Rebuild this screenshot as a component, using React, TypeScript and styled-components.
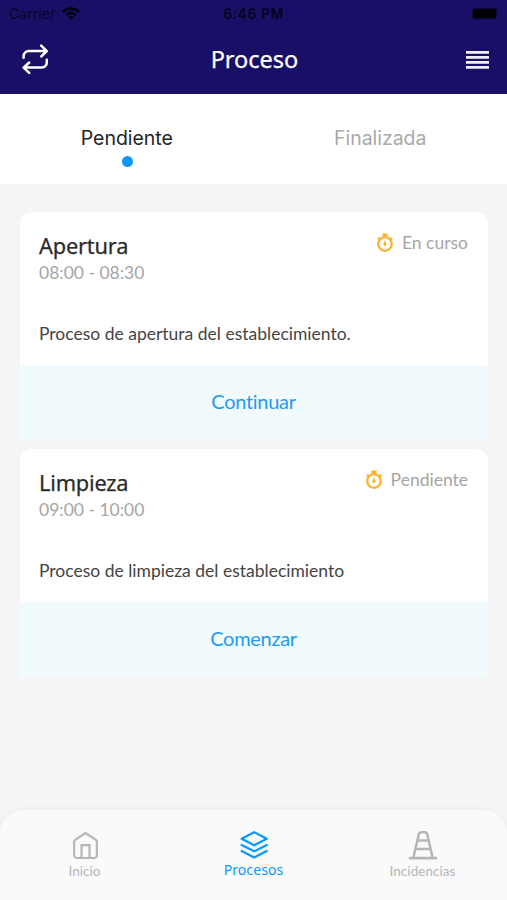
import React from 'react';
import styled, { createGlobalStyle } from 'styled-components';

const GlobalStyle = createGlobalStyle`
  * { box-sizing: border-box; }
  body { margin: 0; background: #f5f5f5; }
`;

const heading = '"Noto Sans", sans-serif';
const text = 'Lato, sans-serif';
const system = 'Inter, sans-serif';

const Screen = styled.div`
  display: flex;
  flex-direction: column;
  width: 507px;
  height: 900px;
  background: #f5f5f5;
  overflow: hidden;
`;

const Header = styled.header`
  height: 94px;
  flex: none;
  background: #181066;
`;

const StatusBar = styled.div`
  display: grid;
  grid-template-columns: 1fr auto 1fr;
  align-items: center;
  height: 27px;
  padding: 0 11px 0 9px;
  color: #06031c;
  font-family: ${system};
  font-size: 14px;
`;

const Carrier = styled.div`
  display: flex;
  align-items: center;
  gap: 6px;
  letter-spacing: 0.1px;
  opacity: 0.8;
`;

const Clock = styled.div`
  padding-left: 2px;
  font-weight: 600;
  letter-spacing: 0.5px;
`;

const Battery = styled.div`
  justify-self: end;
  width: 23px;
  height: 9px;
  border-radius: 2px;
  background: #000;
  box-shadow: 0 0 1.5px 1px rgba(4, 2, 30, 0.65);
`;

const TitleBar = styled.div`
  display: grid;
  grid-template-columns: 1fr auto 1fr;
  align-items: center;
  height: 64px;
  padding: 0 18px 0 20px;
`;

const Title = styled.h1`
  margin: 0;
  color: #fff;
  font: 400 23.5px/32px ${heading};
  -webkit-text-stroke: 0.25px #fff;
`;

const IconButton = styled.button<{ $end?: boolean }>`
  display: flex;
  justify-self: ${p => (p.$end ? 'end' : 'start')};
  padding: ${p => (p.$end ? '2px 0 0' : '0')};
  border: 0;
  background: none;
`;

const Tabs = styled.nav`
  display: grid;
  grid-template-columns: 1fr 1fr;
  flex: none;
  height: 90px;
  background: #fff;
`;

const Tab = styled.button<{ $active?: boolean }>`
  display: flex;
  flex-direction: column;
  align-items: center;
  gap: 5px;
  padding: 32px 0 0;
  border: 0;
  background: none;
  color: ${p => (p.$active ? '#242424' : '#a9a9a9')};
  font: 400 19.5px/25px ${system};
  letter-spacing: -0.05px;
`;

const Dot = styled.span`
  width: 11px;
  height: 11px;
  margin-left: 1px;
  border-radius: 50%;
  background: #0a98fc;
`;

const List = styled.main`
  display: flex;
  flex: 1;
  flex-direction: column;
  gap: 9px;
  padding: 28px 19px 0 20px;
`;

const Card = styled.article`
  height: 228px;
  border-radius: 12px 12px 3px 3px;
  background: #fff;
  overflow: hidden;
`;

const CardBody = styled.div`
  height: 153px;
  padding: 18px 20px 0 19px;
`;

const CardTop = styled.div`
  display: flex;
  justify-content: space-between;
  align-items: flex-start;
`;

const CardTitle = styled.h2`
  margin: 0;
  color: #2b2b2b;
  font: 400 21.8px/31px ${heading};
  letter-spacing: -0.2px;
  -webkit-text-stroke: 0.25px #2b2b2b;
`;

const Time = styled.div`
  color: #a5a5a5;
  font: 400 17.5px/24px ${text};
`;

const Status = styled.div`
  display: flex;
  align-items: center;
  gap: 8px;
  padding-top: 1px;
  color: #a5a5a5;
  font: 400 17.5px/24px ${text};
`;

const Description = styled.p`
  margin: 37px 0 0;
  color: #444;
  font: 400 17.5px/24px ${text};
`;

const Action = styled.button`
  display: flex;
  align-items: center;
  justify-content: center;
  width: 100%;
  height: 75px;
  padding: 0 1px 3px 0;
  border: 0;
  background: #f1fafd;
  color: #1f9bf0;
  font: 400 20px/26px ${text};
  letter-spacing: -0.3px;
`;

const BottomNav = styled.nav`
  display: grid;
  grid-template-columns: repeat(3, 1fr);
  flex: none;
  height: 90px;
  padding-top: 19px;
  border-radius: 24px 24px 0 0;
  background: #fafafa;
  box-shadow: 0 0 7px rgba(0, 0, 0, 0.05);
`;

const NavItem = styled.button<{ $active?: boolean }>`
  display: flex;
  flex-direction: column;
  align-items: center;
  padding: 0;
  border: 0;
  background: none;
  color: ${p => (p.$active ? '#0a98fc' : '#b4b7b9')};
`;

const NavLabel = styled.span<{ $active?: boolean }>`
  font: ${p => (p.$active ? `400 14px/17px ${heading}` : `400 13.5px/20px ${text}`)};
  letter-spacing: ${p => (p.$active ? 0.1 : 0.05)}px;
`;

const WifiIcon = () => (
  <svg width="18" height="13" viewBox="0 0 18 13" fill="none" stroke="#000" strokeWidth="2.7">
    <path d="M1 4.9a11.5 11.5 0 0 1 16 0M4 8a7.3 7.3 0 0 1 10 0" />
    <path d="M9 13 6.2 10.2a4 4 0 0 1 5.6 0z" fill="#000" stroke="none" />
  </svg>
);

const RepeatIcon = () => (
  <svg width="30" height="32" viewBox="0 0 30 32" fill="none" stroke="#fff" strokeWidth="2.5" strokeLinecap="round" strokeLinejoin="round">
    <path d="M3.6 14.7v-1.6a5 5 0 0 1 5-5h18M21.2 2.7l5.6 5.4-5.6 5.4M26.8 16.8v2.8a5 5 0 0 1-5 5h-18M9.2 19.5l-5.6 5.2 5.6 5.2" />
  </svg>
);

const MenuIcon = () => (
  <svg width="23" height="18" viewBox="0 0 23 18" fill="#f1f0fa">
    <path d="M0 0h23v2.7H0zM0 5h23v2.7H0zM0 10h23v2.7H0zM0 15h23v2.7H0z" />
  </svg>
);

const TimerIcon = () => (
  <svg width="18" height="20" viewBox="0 0 18 20" fill="none" stroke="#f8b52c" strokeWidth="2.3">
    <circle cx="9" cy="11" r="6.8" />
    <path d="M6.4 1.8h5.2" strokeWidth="2.4" />
    <path d="M9 2v3" />
    <path d="m2 4.8 2 1.8m12-1.8-2 1.8" />
    <path d="m9 6.8 1.6 4.7a1.6 1.6 0 0 1-3.2 0z" fill="#f8b52c" stroke="none" />
  </svg>
);

const HomeIcon = () => (
  <svg width="30" height="32" viewBox="0 0 30 32" fill="none" stroke="currentColor" strokeWidth="2.2" strokeLinecap="round" strokeLinejoin="round">
    <path d="M15.5 4 5.1 10.9a2.4 2.4 0 0 0-1 1.9v13.4A2.8 2.8 0 0 0 6.9 29h17.2a2.8 2.8 0 0 0 2.8-2.8V12.8a2.4 2.4 0 0 0-1-1.9z" />
    <path d="M11.5 29V16.2h8V29" strokeLinejoin="miter" />
  </svg>
);

const LayersIcon = () => (
  <svg width="30" height="32" viewBox="0 0 30 32" fill="none" stroke="currentColor" strokeWidth="2.2" strokeLinecap="round" strokeLinejoin="round">
    <path d="m15.2 3.2 12.6 6.5-12.6 6.5L2.6 9.7z" />
    <path d="m2.6 15.9 12.6 6.4 12.6-6.4M2.6 22l12.6 6.4L27.8 22" />
  </svg>
);

const ConeIcon = () => (
  <svg width="30" height="32" viewBox="0 0 30 32" fill="none" stroke="currentColor" strokeWidth="2.5" strokeLinecap="round" strokeLinejoin="round">
    <path d="m5.4 28.5 5.4-23.1a2.6 2.6 0 0 1 2.4-2.2h3.6a2.6 2.6 0 0 1 2.4 2.2l5.4 23.1M10 11.6h10M8 20h14" />
    <path d="M2 29.1h26" strokeWidth="2.8" />
  </svg>
);

const processes = [
  { title: 'Apertura', time: '08:00 - 08:30', status: 'En curso', description: 'Proceso de apertura del establecimiento.', action: 'Continuar' },
  { title: 'Limpieza', time: '09:00 - 10:00', status: 'Pendiente', description: 'Proceso de limpieza del establecimiento', action: 'Comenzar' },
];

export default function App() {
  return (
    <Screen>
      <GlobalStyle />
      <Header>
        <StatusBar>
          <Carrier>Carrier <WifiIcon /></Carrier>
          <Clock>6:46 PM</Clock>
          <Battery />
        </StatusBar>
        <TitleBar>
          <IconButton aria-label="Cambiar"><RepeatIcon /></IconButton>
          <Title>Proceso</Title>
          <IconButton $end aria-label="Menú"><MenuIcon /></IconButton>
        </TitleBar>
      </Header>
      <Tabs>
        <Tab $active>Pendiente<Dot /></Tab>
        <Tab>Finalizada</Tab>
      </Tabs>
      <List>
        {processes.map(p => (
          <Card key={p.title}>
            <CardBody>
              <CardTop>
                <CardTitle>{p.title}</CardTitle>
                <Status><TimerIcon />{p.status}</Status>
              </CardTop>
              <Time>{p.time}</Time>
              <Description>{p.description}</Description>
            </CardBody>
            <Action>{p.action}</Action>
          </Card>
        ))}
      </List>
      <BottomNav>
        <NavItem><HomeIcon /><NavLabel>Inicio</NavLabel></NavItem>
        <NavItem $active><LayersIcon /><NavLabel $active>Procesos</NavLabel></NavItem>
        <NavItem><ConeIcon /><NavLabel>Incidencias</NavLabel></NavItem>
      </BottomNav>
    </Screen>
  );
}
